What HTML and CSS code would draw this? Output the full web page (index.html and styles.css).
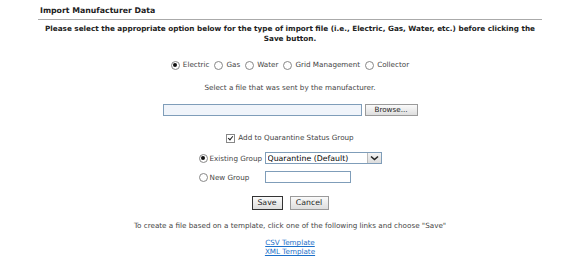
FILE: index.html
```html
<!DOCTYPE html>
<html lang="en">
<head>
  <meta charset="UTF-8">
  <title>Import Manufacturer Data</title>
  <link rel="stylesheet" href="styles.css">
</head>
<body>
  <div class="panel">
    <div class="panel-title">Import Manufacturer Data</div>

    <p class="intro">Please select the appropriate option below for the type of import file (i.e., Electric, Gas, Water, etc.) before clicking the Save button.</p>

    <div class="type-row">
      <label><input type="radio" name="importType" checked> Electric</label>
      <label><input type="radio" name="importType"> Gas</label>
      <label><input type="radio" name="importType"> Water</label>
      <label><input type="radio" name="importType"> Grid Management</label>
      <label><input type="radio" name="importType"> Collector</label>
    </div>

    <p class="hint">Select a file that was sent by the manufacturer.</p>

    <div class="file-row">
      <input type="text" class="file-box">
      <button class="btn browse">Browse...</button>
    </div>

    <div class="check-row">
      <label><input type="checkbox" checked> Add to Quarantine Status Group</label>
    </div>

    <div class="group-grid">
      <label class="opt"><input type="radio" name="grp" checked>Existing Group</label>
      <span class="select-wrap">
        <select class="group-select">
          <option>Quarantine (Default)</option>
        </select>
        <span class="select-arrow">
          <svg width="9" height="6" viewBox="0 0 9 6"><path d="M1 1.5 L4.5 4.5 L8 1.5" fill="none" stroke="#222" stroke-width="1.6"/></svg>
        </span>
      </span>
      <label class="opt"><input type="radio" name="grp">New Group</label>
      <input type="text" class="new-group">
    </div>

    <div class="actions">
      <button class="btn save">Save</button>
      <button class="btn">Cancel</button>
    </div>

    <p class="hint templates-note">To create a file based on a template, click one of the following links and choose "Save"</p>

    <div class="links">
      <a href="#">CSV Template</a><br>
      <a href="#">XML Template</a>
    </div>
  </div>
</body>
</html>
```

FILE: styles.css
```css
body { margin: 0; background: #fff; font-family: "DejaVu Sans", Verdana, sans-serif; font-size: 7.2px; color: #444; }
p { margin: 0; }

.panel { width: 504px; margin-left: 38px; }

.panel-title {
  padding: 6px 0 3px 2px;
  line-height: 10px;
  font-weight: bold;
  font-size: 7.8px;
  color: #222;
  border-bottom: 1px solid #aaa;
}

.intro { margin-top: 4px; line-height: 10px; font-weight: bold; font-size: 7.25px; text-align: center; color: #222; }

.type-row { margin-top: 16px; height: 10px; display: flex; justify-content: center; gap: 5px; line-height: 10px; }
.type-row label, .check-row label, .opt { display: inline-flex; align-items: center; gap: 3px; }

input[type=radio] {
  appearance: none;
  margin: 0;
  width: 9px;
  height: 9px;
  border: 1px solid #888;
  border-radius: 50%;
  background: #fff;
  box-sizing: border-box;
  position: relative;
}
input[type=radio]:checked::after {
  content: "";
  position: absolute;
  left: 1.5px;
  top: 1.5px;
  width: 4px;
  height: 4px;
  border-radius: 50%;
  background: #111;
}

input[type=checkbox] {
  appearance: none;
  margin: 0;
  width: 9px;
  height: 9px;
  border: 1px solid #888;
  background: #fff;
  box-sizing: border-box;
  position: relative;
}
input[type=checkbox]:checked::after {
  content: "";
  position: absolute;
  left: 2px;
  top: 0;
  width: 2px;
  height: 4px;
  border: solid #222;
  border-width: 0 1.5px 1.5px 0;
  transform: rotate(40deg);
}

.hint { margin-top: 13px; line-height: 10px; text-align: center; }

.file-row { margin-top: 11px; display: flex; justify-content: center; gap: 3px; height: 12px; }
.file-box {
  width: 199px;
  height: 12px;
  box-sizing: border-box;
  margin: 0;
  border: 1px solid #7f9db9;
  background: #f0f4fa;
}

.btn {
  margin: 0;
  padding: 0 4px;
  font-family: "DejaVu Sans", Verdana, sans-serif;
  font-size: 7.2px;
  color: #222;
  border: 1px solid #9a9a9a;
  background: linear-gradient(#fafafa, #dedede);
  box-sizing: border-box;
  height: 12px;
  line-height: 10px;
}
.browse { width: 53px; }

.check-row { margin-top: 17px; display: flex; justify-content: center; line-height: 10px; }

.group-grid {
  margin: 9px auto 0;
  width: 183px;
  display: grid;
  grid-template-columns: 66px 117px;
  row-gap: 7px;
  align-items: center;
}
.opt { gap: 2px; }
.select-wrap { position: relative; height: 12px; }
.group-select {
  appearance: none;
  width: 117px;
  height: 12px;
  margin: 0;
  padding: 0 0 0 2px;
  box-sizing: border-box;
  border: 1px solid #7f9db9;
  background: #fff;
  font-family: "DejaVu Sans", Verdana, sans-serif;
  font-size: 7.8px;
  color: #000;
}
.select-arrow {
  position: absolute;
  right: 1px;
  top: 1px;
  width: 14px;
  height: 10px;
  display: flex;
  align-items: center;
  justify-content: center;
  background: linear-gradient(#f4f4f4, #dcdcdc);
  border-left: 1px solid #bbb;
  box-sizing: border-box;
}
.new-group {
  width: 86px;
  height: 12px;
  margin: 0;
  box-sizing: border-box;
  border: 1px solid #7f9db9;
  background: #fff;
}

.actions { margin-top: 13px; display: flex; justify-content: center; gap: 7px; }
.actions .btn { height: 14px; font-size: 7.8px; }
.save { width: 31px; border: 1px solid #333; }
.actions .btn:not(.save) { width: 39px; }

.templates-note { margin-top: 11px; }

.links { margin-top: 7px; text-align: center; line-height: 9px; }
.links a { color: #1a6fc9; text-decoration: underline; }
```
